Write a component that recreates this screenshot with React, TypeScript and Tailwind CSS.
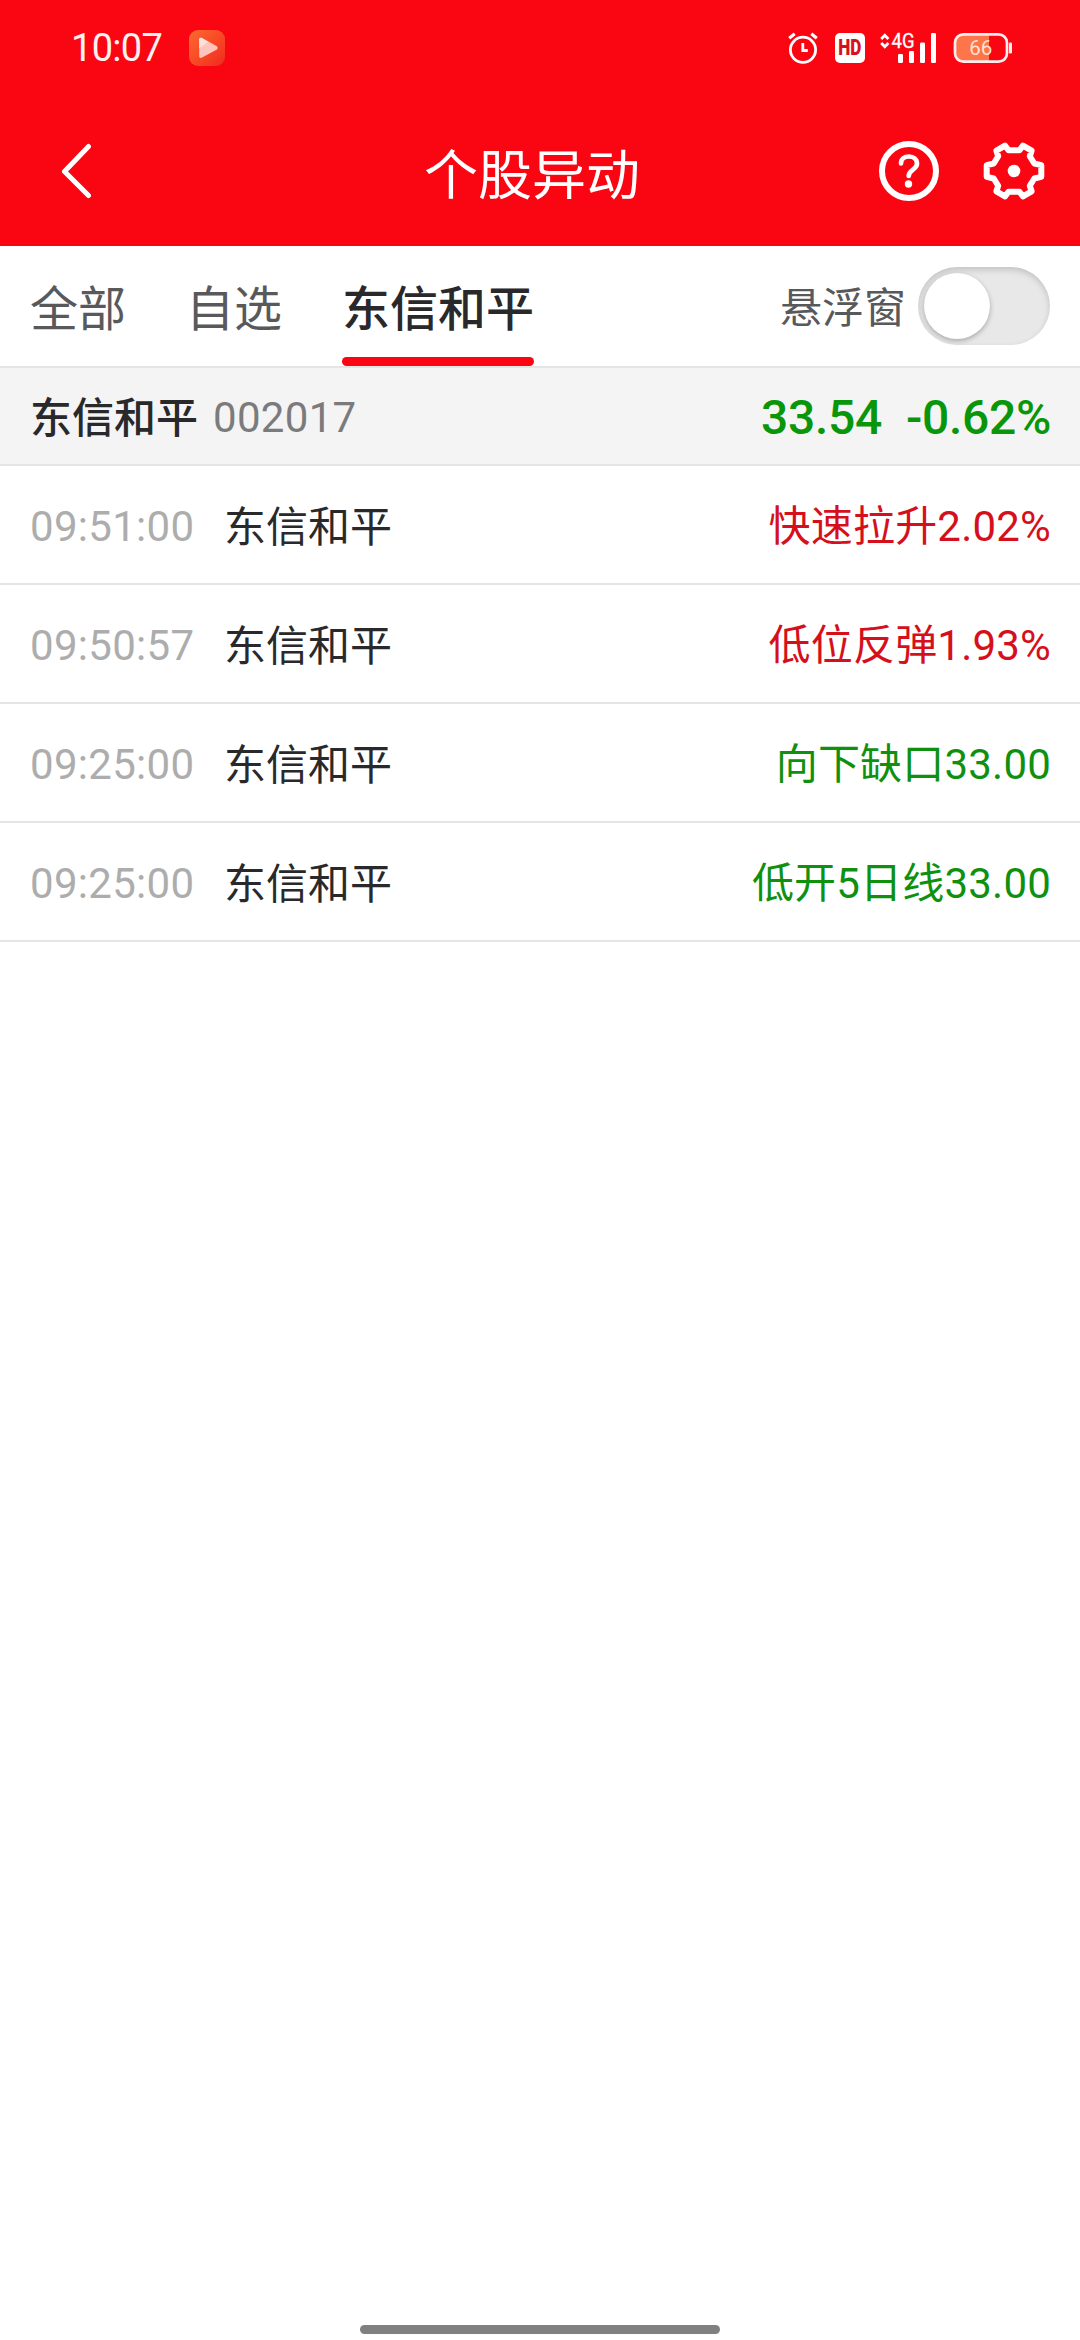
type Alert = { time: string; name: string; event: string; up: boolean };

const alerts: Alert[] = [
  { time: "09:51:00", name: "东信和平", event: "快速拉升2.02%", up: true },
  { time: "09:50:57", name: "东信和平", event: "低位反弹1.93%", up: true },
  { time: "09:25:00", name: "东信和平", event: "向下缺口33.00", up: false },
  { time: "09:25:00", name: "东信和平", event: "低开5日线33.00", up: false },
];

function PlayBadge() {
  return (
    <svg width="36" height="36" viewBox="0 0 36 36">
      <defs>
        <linearGradient id="badge" x1="0" y1="0" x2="1" y2="1">
          <stop offset="0" stopColor="#fb6a30" />
          <stop offset="0.5" stopColor="#f94a26" />
          <stop offset="1" stopColor="#ee2a20" />
        </linearGradient>
      </defs>
      <rect width="36" height="36" rx="9" fill="url(#badge)" />
      <path d="M10.2 9.6c0-1.8 1.2-2.4 2.7-1.6L27.500 16c1.500.9 1.500 2.900 0 3.800L13 27.600c-1.600.9-2.800.3-2.800-1.500z" fill="#ffc5bd" />
      <path d="M10.2 9.600c0-1.800 1.200-2.400 2.700-1.600l6.500 3.700-9.200 6.300z" fill="#ffe0dc" />
    </svg>
  );
}

function AlarmIcon() {
  return (
    <svg width="30" height="32" viewBox="0 0 30 32" fill="none" stroke="#fff" strokeWidth="2.800">
      <circle cx="15" cy="17.800" r="12.600" />
      <path d="M14.800 11v7.500h5" strokeWidth="2.800" />
      <path d="M1.200 6.200 6.700 1.800M28.800 6.200 23.300 1.800" strokeWidth="3.200" />
    </svg>
  );
}

function SignalIcon() {
  return (
    <svg className="overflow-visible" width="57" height="32" viewBox="0 0 57 32" fill="#fff">
      <path d="M1.200 7 4.800 3.200 8.400 7M1.200 11 4.800 14.800 8.400 11" fill="none" stroke="#fff" strokeWidth="2.800" />
      <text x="11.500" y="15.800" fontSize="19.500" fontFamily="Roboto, sans-serif" stroke="#fff" strokeWidth="0.3" textLength="23" lengthAdjust="spacingAndGlyphs">
        4G
      </text>
      <rect x="18" y="22" width="5" height="9" rx="1.200" />
      <rect x="29" y="19" width="5" height="12" rx="1.200" />
      <rect x="40" y="10.500" width="5" height="20.500" rx="1.200" />
      <rect x="51" y="1" width="5" height="30" rx="1.200" />
    </svg>
  );
}

function BatteryIcon() {
  return (
    <svg width="60" height="32" viewBox="0 0 60 32">
      <path d="M36 2H10a8.500 8.500 0 0 0-8.500 8.500v11A8.500 8.500 0 0 0 10 30h26z" fill="#fd7548" />
      <rect x="2" y="2.300" width="52" height="27.400" rx="8.500" fill="none" stroke="#ffecec" strokeWidth="2.700" />
      <rect x="56" y="10.500" width="3" height="11" rx="1.200" fill="#ffecec" />
      <text x="27.800" y="23" fontSize="20.500" textAnchor="middle" fontFamily="Roboto, sans-serif" fill="#ffe3d0">
        66
      </text>
    </svg>
  );
}

function HelpIcon() {
  return (
    <svg width="60" height="60" viewBox="0 0 60 60" fill="none" stroke="#fff">
      <circle cx="30" cy="30" r="27" strokeWidth="6" />
      <path d="M22 22.500c0-4.500 3.500-7 8-7 4.600 0 8 2.800 8 7.200 0 5.800-8.300 6-8.300 12.300" strokeWidth="4.700" strokeLinecap="round" />
      <circle cx="29.500" cy="43" r="3.700" fill="#fff" stroke="none" />
    </svg>
  );
}

function GearIcon() {
  return (
    <svg width="62" height="60" viewBox="0 0 62 60" fill="none">
      <path
        d="M22 4.600 25.500 9.200h11L40 4.600 48.600 9.700 46.800 15.200l4.500 7.300 7 1.700v11.600l-7 1.700-4.500 7.300 1.800 5.500-8.600 5.100-3.500-4.600h-11L22 55.400l-8.600-5.100 1.800-5.500-4.500-7.300-7-1.700V24.200l7-1.700 4.500-7.300-1.800-5.500z"
        stroke="#fff"
        strokeWidth="6"
        strokeLinejoin="round"
      />
      <circle cx="31" cy="30" r="6.300" fill="#fff" />
    </svg>
  );
}

export default function App() {
  return (
    <div className="flex h-[2340px] w-[1080px] flex-col bg-white font-['Roboto','Noto_Sans_CJK_SC',sans-serif] text-[42px] text-[#29292b]">
      <header className="h-[246px] bg-[#fa0512] text-white">
        <div className="flex h-[96px] items-center pr-[67px] pl-[71px]">
          <span className="w-[94px] text-[38px] leading-none tracking-[-0.7px] text-[#fff0f0]">10:07</span>
          <span className="ml-[24px]">
            <PlayBadge />
          </span>
          <div className="ml-auto flex items-center">
            <AlarmIcon />
            <span className="ml-[17px] flex h-[30px] w-[30px] items-center justify-center rounded-[5px] bg-white text-[22px] leading-none font-black text-[#d8121c]">
              <span className="scale-x-[0.78]">HD</span>
            </span>
            <span className="ml-[15px]">
              <SignalIcon />
            </span>
            <span className="ml-[16px]">
              <BatteryIcon />
            </span>
          </div>
        </div>
        <div className="grid h-[150px] grid-cols-[424px_216px_1fr] items-center">
          <svg className="ml-[60px]" width="32" height="56" viewBox="0 0 32 56" fill="none">
            <path d="M28.500 3.500 4.500 28.500l24 24" stroke="#fff" strokeWidth="5" strokeLinecap="round" strokeLinejoin="round" />
          </svg>
          <h1 className="pt-[11px] text-[54px] leading-[72px] whitespace-nowrap">个股异动</h1>
          <div className="flex items-center justify-end gap-[44px] pr-[35px]">
            <HelpIcon />
            <GearIcon />
          </div>
        </div>
      </header>

      <nav className="flex h-[122px] border-b-2 border-[#e5e5e5] pr-[30px] pl-[30px] text-[48px] text-[#59595b]">
        <span className="mr-[60px] pt-[4px] leading-[120px]">全部</span>
        <span className="mr-[60px] pt-[4px] leading-[120px]">自选</span>
        <span className="relative pt-[4px] leading-[120px] font-medium text-[#29292b]">
          东信和平
          <span className="absolute bottom-0 left-0 h-[9px] w-[192px] rounded-full bg-[#fa0512]" />
        </span>
        <div className="ml-auto flex items-center">
          <span className="pt-[6px] text-[42px] leading-[60px]">悬浮窗</span>
          <span className="ml-[12px] flex h-[78px] w-[132px] rounded-full bg-[#e8e8e8] p-[6px] shadow-[inset_0_3px_6px_rgba(0,0,0,0.16)]">
            <span className="h-[66px] w-[66px] rounded-full bg-white shadow-[0_2px_5px_rgba(0,0,0,0.28)]" />
          </span>
        </div>
      </nav>

      <section className="flex h-[98px] items-center border-b-2 border-[#e5e5e5] bg-[#f4f4f4] pt-[2px] pr-[29px] pl-[30px]">
        <span className="pt-[2px] font-medium">东信和平</span>
        <span className="ml-[15px] tracking-[0.3px] text-[#7b7b7d]">002017</span>
        <span className="ml-auto pt-px text-[48px] font-medium tracking-[-0.3px] text-[#0a960a]">33.54</span>
        <span className="ml-[24px] pt-px text-[48px] font-medium tracking-[-0.3px] text-[#0a960a]">-0.62%</span>
      </section>

      <main className="flex-1">
        {alerts.map((a, i) => (
          <div key={i} className="flex h-[119px] items-center border-b-2 border-[#e5e5e5] pt-1 pr-[29px] pl-[30px] leading-[60px]">
            <span className="w-[194px] tracking-[0.3px] text-[#adadad]">{a.time}</span>
            <span className="pt-[2px]">{a.name}</span>
            <span className={a.up ? "ml-auto tracking-[0.2px] text-[#d5101c]" : "ml-auto tracking-[0.2px] text-[#0f910f]"}>{a.event}</span>
          </div>
        ))}
      </main>

      <div className="mx-auto mb-[6px] h-[9px] w-[360px] rounded-full bg-[#808080]" />
    </div>
  );
}
